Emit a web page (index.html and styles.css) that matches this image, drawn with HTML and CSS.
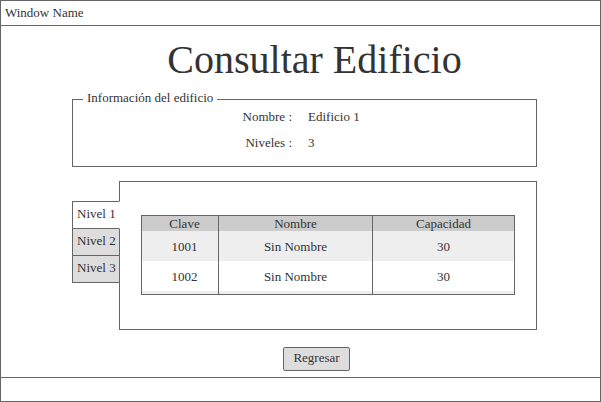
FILE: index.html
```html
<!DOCTYPE html>
<html lang="es">
<head>
<meta charset="utf-8">
<title>Consultar Edificio</title>
<link rel="stylesheet" href="styles.css">
</head>
<body>
<div class="window">
  <div class="titlebar">Window Name</div>
  <div class="main">
    <h1 class="title">Consultar Edificio</h1>
    <fieldset class="info">
      <legend class="info-legend">Información del edificio</legend>
      <div class="info-grid">
        <span class="info-label">Nombre :</span><span class="info-value">Edificio 1</span>
        <span class="info-label">Niveles :</span><span class="info-value">3</span>
      </div>
    </fieldset>
    <div class="tabs-area">
      <div class="tabs">
        <div class="tab tab-active">Nivel 1</div>
        <div class="tab">Nivel 2</div>
        <div class="tab">Nivel 3</div>
      </div>
      <div class="panel">
        <div class="grid-table">
          <div class="row row-head">
            <div class="cell c1">Clave</div>
            <div class="cell c2">Nombre</div>
            <div class="cell c3">Capacidad</div>
          </div>
          <div class="row row-odd">
            <div class="cell c1">1001</div>
            <div class="cell c2">Sin Nombre</div>
            <div class="cell c3">30</div>
          </div>
          <div class="row row-even">
            <div class="cell c1">1002</div>
            <div class="cell c2">Sin Nombre</div>
            <div class="cell c3">30</div>
          </div>
          <div class="row row-odd row-strip">
            <div class="cell c1"></div>
            <div class="cell c2"></div>
            <div class="cell c3"></div>
          </div>
        </div>
      </div>
    </div>
    <div class="actions">
      <button class="btn" type="button">Regresar</button>
    </div>
  </div>
  <div class="statusbar"></div>
</div>
</body>
</html>
```

FILE: styles.css
```css
html, body { margin: 0; padding: 0; background: #fff; }
body {
  font-family: "Liberation Serif", "Times New Roman", serif;
  font-size: 13px;
  color: #333;
}
.window {
  box-sizing: border-box;
  width: 601px;
  height: 402px;
  border: 1px solid #666;
  display: flex;
  flex-direction: column;
  overflow: hidden;
}
.titlebar {
  box-sizing: border-box;
  height: 25px;
  border-bottom: 1px solid #666;
  padding-left: 4px;
  line-height: 23px;
}
.main {
  flex: 1;
  display: flex;
  flex-direction: column;
}
.title {
  margin: 11px 0 0 0;
  padding-left: 28px;
  font-family: "Liberation Serif", "Times New Roman", serif;
  font-size: 40px;
  line-height: 46px;
  font-weight: normal;
  text-align: center;
  color: #333;
}
.info {
  box-sizing: border-box;
  margin: 7px 63px 0 71px;
  padding: 0 0 15px 10px;
  border: 1px solid #666;
  min-width: 0;
}
.info-legend {
  padding: 0 4px 4px 4px;
  line-height: 15px;
}
.info-grid {
  display: grid;
  grid-template-columns: 219px auto;
  column-gap: 16px;
  row-gap: 10px;
  line-height: 16px;
  margin-left: -10px;
}
.info-label { text-align: right; }
.tabs-area {
  display: flex;
  margin: 14px 0 0 71px;
}
.tabs {
  display: flex;
  flex-direction: column;
  margin-top: 20px;
  width: 48px;
  margin-right: -1px;
}
.tab {
  box-sizing: border-box;
  height: 28px;
  border: 1px solid #666;
  background: #ddd;
  padding: 2px 0 0 4px;
  line-height: 20px;
  white-space: nowrap;
}
.tab + .tab { margin-top: -1px; }
.tab-active {
  background: #fff;
  border-right-color: #fff;
  position: relative;
  z-index: 1;
}
.panel {
  box-sizing: border-box;
  width: 418px;
  height: 149px;
  border: 1px solid #666;
  padding: 33px 21px 0 21px;
}
.grid-table {
  box-sizing: border-box;
  width: 374px;
  height: 80px;
  border: 1px solid #666;
  overflow: hidden;
}
.row {
  display: grid;
  grid-template-columns: 76px 154px 142px;
  text-align: center;
}
.cell { box-sizing: border-box; }
.row-head { background: #ccc; height: 15px; line-height: 15px; }
.row-odd { background: #eee; }
.row-even { background: #fff; }
.row-odd .cell, .row-even .cell {
  height: 30px;
  padding-top: 2px;
  line-height: 28px;
}
.row-strip .cell { height: 3px; padding: 0; }
.c1 { padding-left: 9px; }
.c2, .c3 { border-left: 1px solid #666; }
.actions {
  display: flex;
  justify-content: center;
  padding-left: 32px;
  margin-top: 17px;
}
.btn {
  box-sizing: border-box;
  width: 67px;
  height: 24px;
  border: 1px solid #666;
  border-radius: 2px;
  background: #ddd;
  font-family: "Liberation Serif", "Times New Roman", serif;
  font-size: 13px;
  color: #333;
  padding: 0 0 3px 0;
  line-height: 19px;
}
.statusbar {
  box-sizing: border-box;
  height: 24px;
  border-top: 1px solid #666;
}
```
